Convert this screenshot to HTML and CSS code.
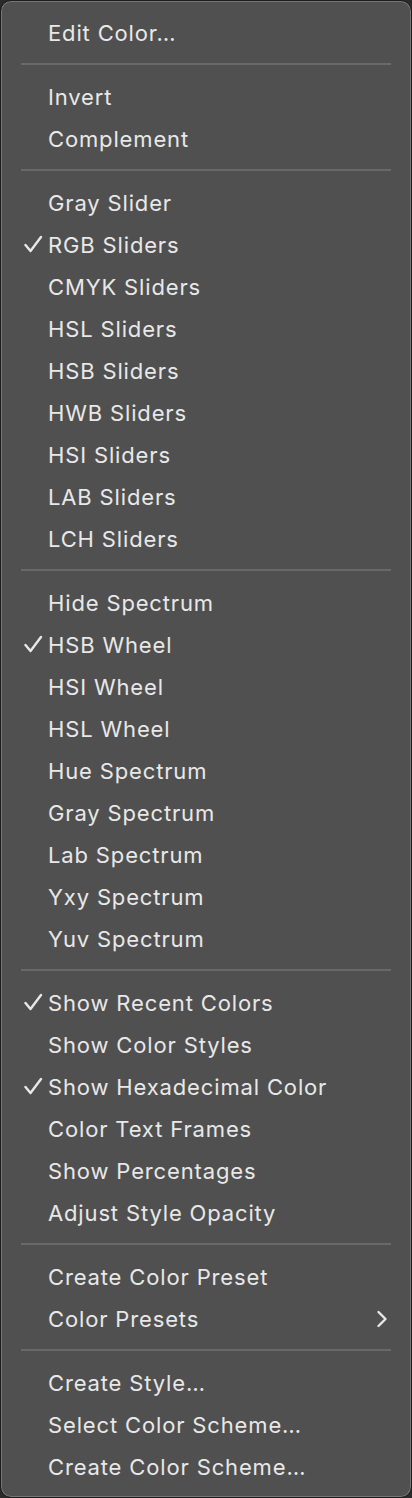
FILE: index.html
```html
<!DOCTYPE html>
<html>
<head>
<meta charset="utf-8">
<link rel="stylesheet" href="styles.css">
</head>
<body>
<div class="menu">
  <div class="item">Edit Color…</div>
  <div class="sep"></div>
  <div class="item">Invert</div>
  <div class="item">Complement</div>
  <div class="sep"></div>
  <div class="item">Gray Slider</div>
  <div class="item checked">RGB Sliders</div>
  <div class="item">CMYK Sliders</div>
  <div class="item">HSL Sliders</div>
  <div class="item">HSB Sliders</div>
  <div class="item">HWB Sliders</div>
  <div class="item">HSI Sliders</div>
  <div class="item">LAB Sliders</div>
  <div class="item">LCH Sliders</div>
  <div class="sep"></div>
  <div class="item">Hide Spectrum</div>
  <div class="item checked">HSB Wheel</div>
  <div class="item">HSI Wheel</div>
  <div class="item">HSL Wheel</div>
  <div class="item">Hue Spectrum</div>
  <div class="item">Gray Spectrum</div>
  <div class="item">Lab Spectrum</div>
  <div class="item">Yxy Spectrum</div>
  <div class="item">Yuv Spectrum</div>
  <div class="sep"></div>
  <div class="item checked">Show Recent Colors</div>
  <div class="item">Show Color Styles</div>
  <div class="item checked">Show Hexadecimal Color</div>
  <div class="item">Color Text Frames</div>
  <div class="item">Show Percentages</div>
  <div class="item">Adjust Style Opacity</div>
  <div class="sep"></div>
  <div class="item">Create Color Preset</div>
  <div class="item submenu">Color Presets
    <svg class="chev" width="12" height="18" viewBox="0 0 12 18"><path d="M2.5 2 L9.5 9 L2.5 16" fill="none" stroke="#e8e8e8" stroke-width="2.4" stroke-linecap="round" stroke-linejoin="round"/></svg>
  </div>
  <div class="sep"></div>
  <div class="item">Create Style…</div>
  <div class="item">Select Color Scheme…</div>
  <div class="item">Create Color Scheme…</div>
</div>
</body>
</html>
```
FILE: styles.css
```css
html, body {
  margin: 0;
  padding: 0;
  background: #2a2a2a;
}
body {
  width: 412px;
  height: 1498px;
  font-family: Inter, "Noto Sans", sans-serif;
}
.menu {
  box-sizing: border-box;
  width: 412px;
  height: 1498px;
  background: #505050;
  border: 1px solid #1c1c1c;
  border-radius: 11px;
  box-shadow: inset 0 0 0 1px #767676;
  padding: 10px 0 9px;
  display: flex;
  flex-direction: column;
}
.item {
  position: relative;
  height: 42px;
  display: flex;
  align-items: center;
  padding-left: 47px;
  padding-right: 23px;
  padding-top: 2px;
  box-sizing: border-box;
  color: #e8e8e8;
  font-size: 22px;
  letter-spacing: 0.85px;
}
.item.checked::before {
  content: "";
  position: absolute;
  left: 23px;
  top: 12px;
  width: 19px;
  height: 18px;
  background: no-repeat center / contain url("data:image/svg+xml;utf8,<svg xmlns='http://www.w3.org/2000/svg' viewBox='0 0 19 18'><path d='M1.5 10 L6.5 16 L17 2' fill='none' stroke='%23e8e8e8' stroke-width='2.4' stroke-linecap='round' stroke-linejoin='round'/></svg>");
}
.submenu {
  justify-content: space-between;
}
.sep {
  height: 22px;
  display: flex;
  align-items: center;
  padding: 0 20px;
}
.sep::after {
  content: "";
  flex: 1;
  height: 2px;
  background: #696969;
}
```
